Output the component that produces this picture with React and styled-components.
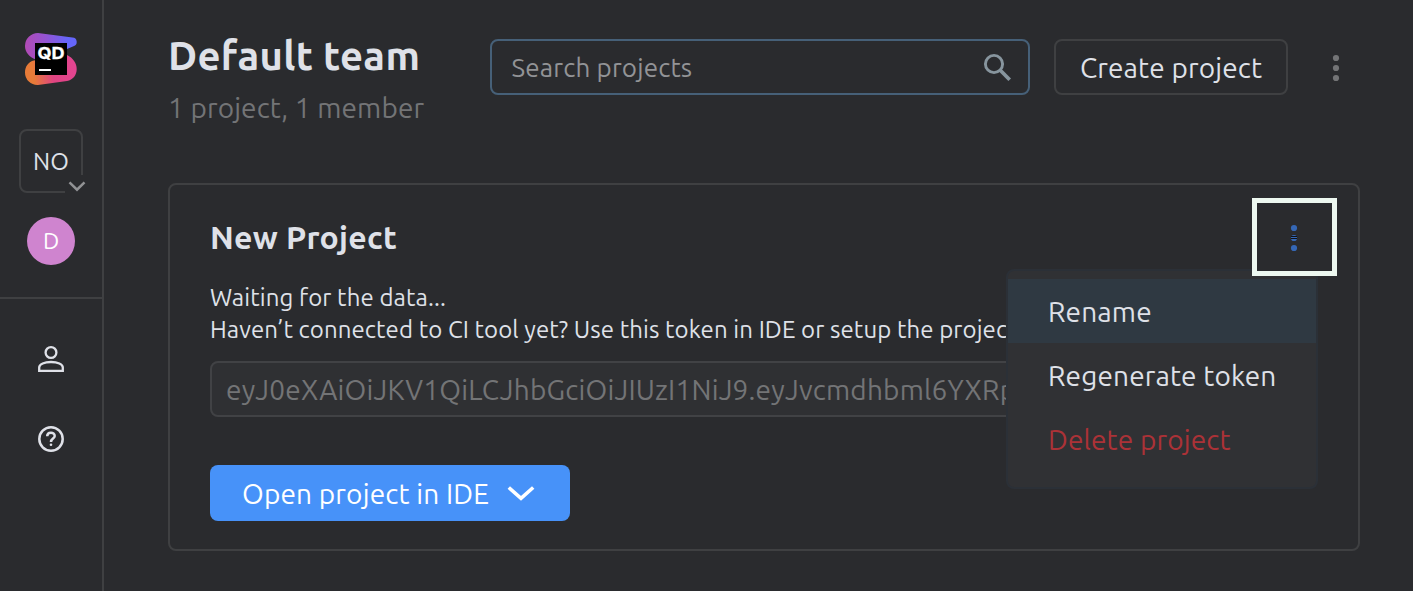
import React from "react";
import styled, { createGlobalStyle } from "styled-components";

const GlobalStyle = createGlobalStyle`
  * { box-sizing: border-box; }
  html, body, #root { height: 100%; }
  body {
    margin: 0;
    overflow: hidden;
    background: #2a2b2e;
    color: #dfe1e8;
    font-family: Ubuntu, "Noto Sans", "Open Sans", sans-serif;
  }
  h1, h2, p { margin: 0; }
  svg { display: block; flex: none; }
`;

const Page = styled.div`
  display: flex;
  height: 591px;
  overflow: hidden;
`;

const Sidebar = styled.aside`
  display: flex;
  flex-direction: column;
  flex: none;
  width: 104px;
  border-right: 2px solid #3f4042;
`;

const SidebarTop = styled.div`
  display: flex;
  flex-direction: column;
  align-items: center;
  height: 299px;
  padding-top: 32px;
  border-bottom: 2px solid #3f4042;
`;

const SidebarNav = styled.nav`
  display: flex;
  flex-direction: column;
  align-items: center;
  gap: 48px;
  padding-top: 44px;
`;

const OrgButton = styled.div`
  position: relative;
  display: flex;
  align-items: center;
  justify-content: center;
  width: 64px;
  height: 64px;
  margin-top: 43px;
  border: 2px solid #3f4042;
  border-radius: 8px;
  font-size: 24px;
`;

const OrgCaret = styled.span`
  position: absolute;
  right: -6px;
  bottom: -4px;
  width: 22px;
  height: 20px;
  padding: 6px 0 0 3px;
  background: #2a2b2e;
`;

const Avatar = styled.div`
  display: flex;
  align-items: center;
  justify-content: center;
  width: 48px;
  height: 48px;
  margin-top: 24px;
  padding-bottom: 2px;
  border-radius: 50%;
  background: #cf84cf;
  color: #fff;
  font-size: 23px;
`;

const Main = styled.main`
  flex: none;
  width: 1256px;
  padding-left: 64px;
`;

const Header = styled.header`
  display: flex;
  height: 183px;
  padding-top: 39px;
`;

const TeamInfo = styled.div`
  flex: none;
  width: 322px;
  margin-top: -10px;
  white-space: nowrap;
`;

const TeamName = styled.h1`
  font-size: 40px;
  font-weight: 700;
  line-height: 54px;
  letter-spacing: 0.33px;
`;

const TeamMeta = styled.p`
  margin-top: 6px;
  color: #737476;
  font-size: 28px;
  line-height: 38px;
  letter-spacing: 0.12px;
`;

const SearchField = styled.div`
  display: flex;
  align-items: center;
  justify-content: space-between;
  width: 540px;
  height: 56px;
  padding: 0 15px 0 19.5px;
  border: 2px solid #466078;
  border-radius: 8px;
  color: #929396;
  font-size: 26px;
  letter-spacing: 0.14px;
`;

const OutlineButton = styled.div`
  display: flex;
  align-items: center;
  justify-content: center;
  width: 234px;
  height: 56px;
  margin-left: 24px;
  padding-top: 1px;
  border: 2px solid #3f4042;
  border-radius: 8px;
  font-size: 28px;
  white-space: nowrap;
  letter-spacing: 0.15px;
`;

const HeaderMore = styled.div`
  display: flex;
  align-items: center;
  height: 58px;
  margin-left: 44px;
`;

const Card = styled.section`
  position: relative;
  width: 1192px;
  height: 368px;
  padding: 31px 40px 0;
  border: 2px solid #3f4042;
  border-radius: 8px;
`;

const CardTitle = styled.h2`
  font-size: 32px;
  font-weight: 700;
  line-height: 42px;
  letter-spacing: 0.25px;
`;

const CardText = styled.p`
  margin-top: ${(p) => p.$gap || 0}px;
  overflow: hidden;
  font-size: 24px;
  line-height: 32px;
  white-space: nowrap;
  letter-spacing: 0.1px;
`;

const TokenField = styled.div`
  display: flex;
  align-items: center;
  height: 56px;
  margin-top: 15px;
  padding: 0 14px;
  overflow: hidden;
  border: 2px solid #414245;
  border-radius: 8px;
  background: #2f3033;
  color: #737476;
  font-size: 28px;
  white-space: nowrap;
  letter-spacing: 0.2px;
`;

const PrimaryButton = styled.div`
  display: flex;
  align-items: center;
  justify-content: space-between;
  width: 360px;
  height: 56px;
  margin-top: 48px;
  padding: 1px 35px 0 32px;
  border-radius: 8px;
  background: #4792f9;
  color: #fff;
  font-size: 28px;
  white-space: nowrap;
  letter-spacing: 0.17px;
`;

const Menu = styled.div`
  position: absolute;
  top: 84px;
  right: 40px;
  width: 312px;
  height: 220px;
  padding-top: 8px;
  border: 2px solid #2b3037;
  border-radius: 8px;
  background: #303134;
`;

const MenuItem = styled.div`
  display: flex;
  align-items: center;
  height: 64px;
  padding: 0 0 0 40px;
  background: ${(p) => (p.$active ? "#2f3942" : "transparent")};
  color: ${(p) => (p.$danger ? "#ab3237" : "#dfe1e8")};
  font-size: 28px;
  white-space: nowrap;
  letter-spacing: 0.15px;
`;

const FocusFrame = styled.div`
  position: absolute;
  top: 13px;
  right: 21px;
  display: flex;
  align-items: center;
  justify-content: center;
  width: 85px;
  height: 78px;
  padding: 2px 1px 0 0;
  border: 5px solid #edf8f0;
  background: #2a2b2e;
`;

const Logo = () => (
  <svg width="54" height="54" viewBox="0 0 54 54">
    <defs>
      <linearGradient id="top" x1="2" y1="16" x2="52" y2="10" gradientUnits="userSpaceOnUse">
        <stop offset="0" stopColor="#b04bb5" />
        <stop offset="0.4" stopColor="#9553d2" />
        <stop offset="0.85" stopColor="#6566fa" />
      </linearGradient>
      <linearGradient id="bottom" x1="2" y1="42" x2="50" y2="36" gradientUnits="userSpaceOnUse">
        <stop offset="0.15" stopColor="#e77b38" />
        <stop offset="0.55" stopColor="#e04482" />
        <stop offset="1" stopColor="#e34590" />
      </linearGradient>
    </defs>
    <path d="M14 1 48.500 5.500A4.500 4.500 0 0 1 49.500 14.300L43 17 12 27.500C5 25 1 20 1 14A13 13 0 0 1 14 1Z" fill="url(#top)" />
    <path d="M10 28.500 43 23C49 26 52.700 31 52.700 37C52.700 43 49 48 43 49L14 53A12.400 12.400 0 0 1 1 40.500C1 34.500 4.500 29.500 10 28.500Z" fill="url(#bottom)" />
    <rect x="11" y="11" width="32" height="32" fill="#000" />
    <text x="13.600" y="26.900" fill="#fff" stroke="#fff" strokeWidth="0.300" fontFamily="Inter, sans-serif" fontWeight="700" fontSize="16.500" textLength="27" lengthAdjust="spacingAndGlyphs">QD</text>
    <rect x="15" y="37" width="12" height="2" fill="#fff" />
  </svg>
);

const MoreDots = ({ color, struck }) => (
  <svg width="8" height="28" viewBox="0 0 8 28" fill={color}>
    <circle cx="4" cy="4" r="3.100" />
    <circle cx="4" cy="14" r="3.100" />
    <circle cx="4" cy="24" r="3.100" />
    {struck && <path d="M1 12h6v1H1zM1 14h6v1H1z" fill="#101114" />}
  </svg>
);

const SearchIcon = () => (
  <svg width="30" height="30" viewBox="0 0 30 30" fill="none" stroke="#87959e" strokeWidth="2.900">
    <circle cx="11" cy="12" r="8.600" />
    <path d="M17 18 26.700 27.700" strokeWidth="3.700" />
  </svg>
);

const UserIcon = () => (
  <svg width="32" height="32" viewBox="0 0 32 32" fill="none" stroke="#dfe1e8" strokeWidth="2.300">
    <circle cx="16" cy="9.500" r="5.400" />
    <path d="M4.200 27.900V24.500C4.200 21 9.500 19 16 19S27.800 21 27.800 24.500V27.900Z" />
  </svg>
);

const HelpIcon = () => (
  <svg width="32" height="32" viewBox="0 0 32 32" fill="none" stroke="#dfe1e8" strokeWidth="2.500">
    <circle cx="16" cy="16" r="11.700" />
    <path d="M12.200 13.300C12.200 8.600 19.700 8.700 19.700 13C19.700 15.700 16 15.500 16 18.900" />
    <circle cx="16" cy="21.800" r="1.300" fill="#dfe1e8" stroke="none" />
  </svg>
);

export default function App() {
  return (
    <>
      <GlobalStyle />
      <Page>
        <Sidebar>
          <SidebarTop>
            <Logo />
            <OrgButton>
              NO
              <OrgCaret>
                <svg width="18" height="11" viewBox="0 0 18 11" fill="none" stroke="#919294" strokeWidth="2.500">
                  <path d="M1.500 1.300 9 8.700 16.500 1.300" />
                </svg>
              </OrgCaret>
            </OrgButton>
            <Avatar>D</Avatar>
          </SidebarTop>
          <SidebarNav>
            <UserIcon />
            <HelpIcon />
          </SidebarNav>
        </Sidebar>
        <Main>
          <Header>
            <TeamInfo>
              <TeamName>Default team</TeamName>
              <TeamMeta>1 project, 1 member</TeamMeta>
            </TeamInfo>
            <SearchField>
              <span>Search projects</span>
              <SearchIcon />
            </SearchField>
            <OutlineButton>Create project</OutlineButton>
            <HeaderMore><MoreDots color="#737476" /></HeaderMore>
          </Header>
          <Card>
            <CardTitle>New Project</CardTitle>
            <CardText $gap={24}>Waiting for the data...</CardText>
            <CardText>Haven’t connected to CI tool yet? Use this token in IDE or setup the project</CardText>
            <TokenField>eyJ0eXAiOiJKV1QiLCJhbGciOiJIUzI1NiJ9.eyJvcmdhbml6YXRp</TokenField>
            <PrimaryButton>
              <span>Open project in IDE</span>
              <svg width="28" height="18" viewBox="0 0 28 18" fill="none" stroke="#fff" strokeWidth="3.600">
                <path d="M1.800 2.500 14 13.300 26.200 2.500" />
              </svg>
            </PrimaryButton>
            <Menu>
              <MenuItem $active>Rename</MenuItem>
              <MenuItem>Regenerate token</MenuItem>
              <MenuItem $danger>Delete project</MenuItem>
            </Menu>
            <FocusFrame><MoreDots color="#3567b5" struck /></FocusFrame>
          </Card>
        </Main>
      </Page>
    </>
  );
}
